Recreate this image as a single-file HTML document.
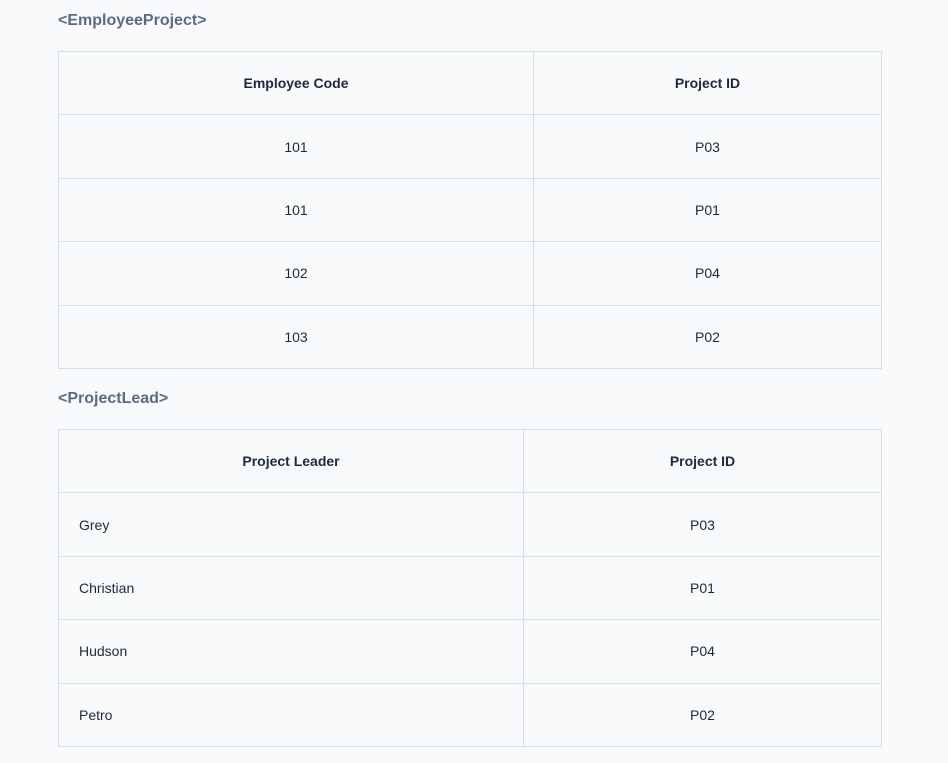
<!DOCTYPE html>
<html><head><style>
body{margin:0;background:#f8fafc;font-family:"Liberation Sans",sans-serif;width:948px;height:763px;overflow:hidden;position:relative}
h3{position:absolute;left:58px;margin:0;font-size:16px;font-weight:bold;color:#5b6b86;line-height:20px}
table{position:absolute;left:58px;width:824px;border-collapse:collapse;font-size:14px;color:#1e293b}
td,th{border:1px solid #d5dde6;height:62.4px;padding:0;text-align:center}
th{font-weight:bold}
td.l{text-align:left;padding-left:20px}
</style></head><body>
<h3 style="top:11px">&lt;EmployeeProject&gt;</h3>
<table style="top:51px">
<tr><th style="width:474px">Employee Code</th><th>Project ID</th></tr>
<tr><td>101</td><td>P03</td></tr>
<tr><td>101</td><td>P01</td></tr>
<tr><td>102</td><td>P04</td></tr>
<tr><td>103</td><td>P02</td></tr>
</table>
<h3 style="top:389px">&lt;ProjectLead&gt;</h3>
<table style="top:429px">
<tr><th style="width:464px">Project Leader</th><th>Project ID</th></tr>
<tr><td class="l">Grey</td><td>P03</td></tr>
<tr><td class="l">Christian</td><td>P01</td></tr>
<tr><td class="l">Hudson</td><td>P04</td></tr>
<tr><td class="l">Petro</td><td>P02</td></tr>
</table>
</body></html>
